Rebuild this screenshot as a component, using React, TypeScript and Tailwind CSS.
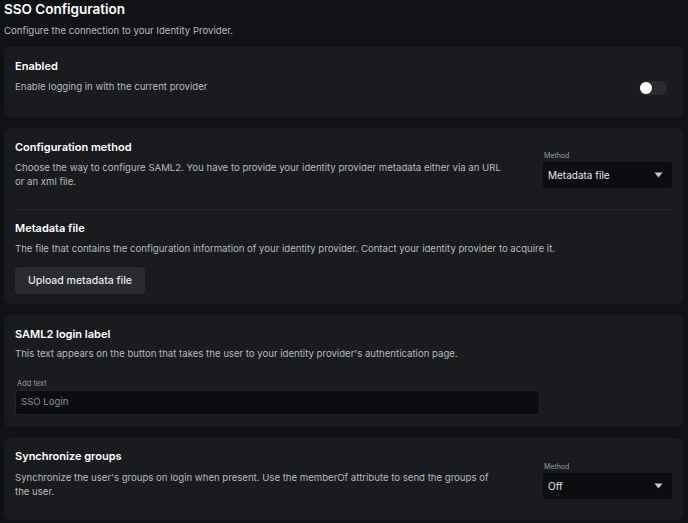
function Caret() {
  return (
    <svg width="9" height="6" viewBox="0 0 9 6" className="text-[#c9cacd]">
      <path d="M0.5 0.5h8L4.5 5.5z" fill="currentColor" />
    </svg>
  );
}

function Select({ value }: { value: string }) {
  return (
    <div className="w-[129px] shrink-0">
      <div className="text-[7px] leading-[9px] text-[#9a9ba0] mb-[2px] pl-[1px]">Method</div>
      <div className="h-[26px] rounded-[3px] bg-[#0c0d11] flex items-center justify-between pl-[5px] pr-[9px] text-[10px] text-[#e6e7ea]">
        <span>{value}</span>
        <Caret />
      </div>
    </div>
  );
}

function Toggle() {
  return (
    <div className="w-[28px] h-[14px] rounded-full bg-[#2b2c30] flex items-center pl-[1px]">
      <div className="w-[12px] h-[12px] rounded-full bg-white" />
    </div>
  );
}

function Card({ children, className = "" }: { children: React.ReactNode; className?: string }) {
  return <section className={`rounded-[6px] bg-[#1a1b1f] px-[11px] ${className}`}>{children}</section>;
}

const heading = "text-[11px] font-semibold text-white leading-[16px]";
const desc = "text-[9.6px] leading-[14px]";

export default function App() {
  return (
    <div
      className="min-h-[523px] w-[688px] bg-[#111216] pl-[4px] pr-[5px] text-[#b8b9bd] overflow-hidden"
      style={{ fontFamily: "Inter, 'Noto Sans', sans-serif" }}
    >
      <h1 className="text-[13.5px] font-semibold text-white leading-[18px]">SSO Configuration</h1>
      <p className="text-[9.6px] leading-[14px] mt-[6px]">Configure the connection to your Identity Provider.</p>

      <div className="flex flex-col gap-[11px] mt-[9px]">
        {/* Enabled */}
        <Card className="pt-[11px] pb-[23px]">
          <div className="flex items-end justify-between">
            <div>
              <h2 className={heading}>Enabled</h2>
              <p className={`${desc} mt-[6px]`}>Enable logging in with the current provider</p>
            </div>
            <div className="mr-[5px] mb-[-1px]">
              <Toggle />
            </div>
          </div>
        </Card>

        {/* Configuration method + metadata file */}
        <Card className="pt-[11px] pb-[10px]">
          <div className="flex justify-between">
            <div className="max-w-[495px]">
              <h2 className={heading}>Configuration method</h2>
              <p className={`${desc} mt-[6px]`}>
                Choose the way to configure SAML2. You have to provide your identity provider metadata either via an URL
                or an xml file.
              </p>
            </div>
            <div className="mt-[12px]">
              <Select value="Metadata file" />
            </div>
          </div>
          <div className="h-px bg-[#26272b] mt-[20px]" />
          <h2 className={`${heading} mt-[10px]`}>Metadata file</h2>
          <p className={`${desc} mt-[6px]`}>
            The file that contains the configuration information of your identity provider. Contact your identity provider
            to acquire it.
          </p>
          <button className="mt-[11px] h-[27px] px-[13px] rounded-[4px] bg-[#2a2b2f] text-[10.5px] font-medium text-[#e6e7ea]">
            Upload metadata file
          </button>
        </Card>

        {/* SAML2 login label */}
        <Card className="pt-[11px] pb-[12px]">
          <h2 className={heading}>SAML2 login label</h2>
          <p className={`${desc} mt-[5px]`}>
            This text appears on the button that takes the user to your identity provider's authentication page.
          </p>
          <div className="text-[7.5px] leading-[10px] text-[#9a9ba0] mt-[18px] pl-[2px]">Add text</div>
          <div className="mt-[1px] w-[525px] h-[25px] rounded-[3px] bg-[#0c0d11] border border-[#222327] flex items-center pl-[5px] text-[9.6px] text-[#8e8f94]">
            SSO Login
          </div>
        </Card>

        {/* Synchronize groups */}
        <Card className="pt-[10px] pb-[21px]">
          <div className="flex justify-between">
            <div className="max-w-[484px]">
              <h2 className={heading}>Synchronize groups</h2>
              <p className={`${desc} mt-[7px]`}>
                Synchronize the user's groups on login when present. Use the memberOf attribute to send the groups of
                the user.
              </p>
            </div>
            <div className="mt-[14px]">
              <Select value="Off" />
            </div>
          </div>
        </Card>
      </div>
    </div>
  );
}
